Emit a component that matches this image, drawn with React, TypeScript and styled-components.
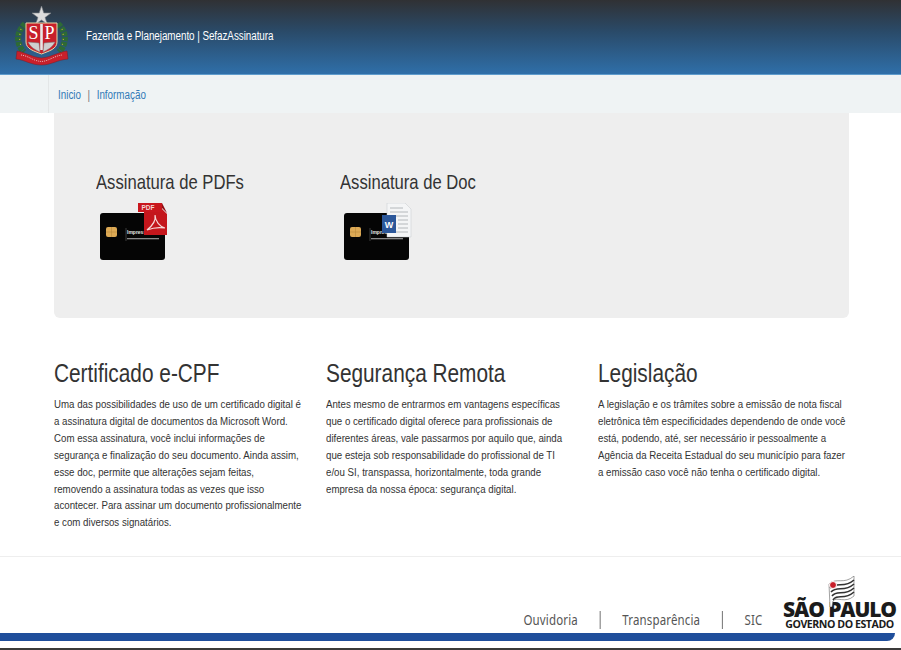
import styled, { createGlobalStyle, css } from "styled-components";

const GlobalStyle = createGlobalStyle`
  html, body {
    margin: 0;
    padding: 0;
    background: #fff;
    font-family: "Liberation Sans", Arial, sans-serif;
    color: #333;
  }
`;

// the reference is squeezed sideways, so its text is narrower than any installed font
const squeezed = css`
  transform: scaleX(0.82);
  transform-origin: left center;
`;

const Page = styled.div`
  width: 901px;
  height: 650px;
  overflow: hidden;
  display: flex;
  flex-direction: column;
`;

const Header = styled.header`
  height: 75px;
  flex: none;
  display: flex;
  align-items: flex-start;
  padding-left: 15px;
  box-sizing: border-box;
  background: linear-gradient(to bottom, #303134 0%, #2a4a68 42%, #2f6fa9 100%);
  border-bottom: 1px solid #5f9ccc;
`;

const HeaderTitle = styled.div`
  margin: 29px 0 0 17px;
  color: #fff;
  font-size: 12px;
  line-height: 14px;
  letter-spacing: -0.05px;
  white-space: nowrap;
  ${squeezed}
`;

const NavBar = styled.nav`
  height: 38px;
  flex: none;
  background: #eff3f4;
  padding-left: 48px;
  box-sizing: border-box;
`;

const NavInner = styled.div`
  height: 100%;
  border-left: 1px solid #e3e6e7;
  padding-left: 9px;
`;

const NavLinks = styled.div`
  height: 100%;
  display: flex;
  align-items: center;
  gap: 8px;
  padding-top: 2px;
  box-sizing: border-box;
  font-size: 12px;
  ${squeezed}
`;

const NavLink = styled.a`
  color: #337ab7;
`;

const NavSep = styled.span`
  color: #777;
`;

const Jumbotron = styled.section`
  flex: none;
  height: 205px;
  margin: 0 52px 0 54px;
  background: #eeeeee;
  border-radius: 0 0 6px 6px;
  display: flex;
  padding: 58px 0 0 42px;
  box-sizing: border-box;
`;

const Feature = styled.div`
  width: 243.5px;
`;

const FeatureTitle = styled.h3`
  margin: 0;
  font-size: 20.3px;
  line-height: 22px;
  font-weight: 400;
  white-space: nowrap;
  color: #333;
  ${squeezed}
`;

const CardArt = styled.svg`
  display: block;
  margin: 10px 0 0 4px;
`;

const Columns = styled.section`
  flex: none;
  margin: 40px 0 0 54px;
  display: grid;
  grid-template-columns: repeat(3, 250px);
  column-gap: 22px;
  height: 198px;
`;

const ColumnTitle = styled.h2`
  margin: 0 0 8px;
  font-size: 25.4px;
  line-height: 30px;
  font-weight: 400;
  white-space: nowrap;
  color: #333;
  ${squeezed}
`;

const ColumnText = styled.p`
  margin: 0;
  width: 304px;
  font-size: 11.83px;
  line-height: 16.9px;
  color: #333;
  transform: scaleX(0.82);
  transform-origin: left top;
`;

const Footer = styled.footer`
  flex: none;
  border-top: 1px solid #eeeeee;
  height: 94px;
  box-sizing: border-box;
  display: flex;
  flex-direction: column;
  justify-content: flex-end;
`;

const FooterRow = styled.div`
  display: flex;
  justify-content: flex-end;
  align-items: flex-end;
  height: 60px;
  padding-right: 6px;
  margin-bottom: 4px;
`;

const FooterLinks = styled.div`
  display: flex;
  align-items: center;
  margin: 0 22px 0 0;
  font-family: "Noto Sans", sans-serif;
  font-size: 14px;
  letter-spacing: 0.2px;
  color: #555;
  transform: scaleX(0.82);
  transform-origin: right center;
`;

const FooterLink = styled.span<{ $divider?: boolean }>`
  padding: 0 26.5px;
  line-height: 18px;
  border-right: ${(p) => (p.$divider ? "1px solid #555" : "none")};

  &:first-child {
    padding-left: 0;
  }
  &:last-child {
    padding-right: 0;
  }
`;

const StateLogo = styled.div`
  width: 111px;
  position: relative;
  display: flex;
  flex-direction: column;
  align-items: center;
  font-family: "Open Sans", sans-serif;
  color: #1b1b1b;
  font-weight: 800;
  white-space: nowrap;
`;

const LogoFlag = styled.svg`
  position: absolute;
  left: 43px;
  top: -24px;
`;

const LogoName = styled.div`
  font-size: 21px;
  line-height: 19px;
  letter-spacing: -1.1px;
`;

const LogoSub = styled.div`
  font-size: 10.6px;
  font-weight: 700;
  line-height: 10px;
  letter-spacing: -0.45px;
`;

const BlueBar = styled.div`
  height: 8px;
  flex: none;
  margin-right: 6px;
  background: #1f4e9b;
  border-radius: 0 0 8px 0;
`;

const BottomLine = styled.div`
  height: 2px;
  flex: none;
  margin-top: 7px;
  background: #3a3a3a;
`;

const Crest = () => (
  <svg width="54" height="68" viewBox="0 0 54 68">
    <polygon points="26.5,6 28.8,13 36,13 30,17.5 32.3,24 26.5,20 20.7,24 23,17.5 17,13 24.2,13" fill="#dcdcdc" stroke="#7f8388" strokeWidth="0.6" />
    <path d="M10 24 C1 32 1 44 9 52" fill="none" stroke="#2d6a35" strokeWidth="6" strokeDasharray="4 1" />
    <path d="M43 24 C52 32 52 44 44 52" fill="none" stroke="#2d6a35" strokeWidth="6" strokeDasharray="4 1" />
    <path d="M6 29 C4 35 4 42 7 48" fill="none" stroke="#c9a93f" strokeWidth="1.2" strokeDasharray="1 4" />
    <path d="M47 29 C49 35 49 42 46 48" fill="none" stroke="#c9a93f" strokeWidth="1.2" strokeDasharray="1 4" />
    <path d="M11 23 H42 V42 C42 49 34 51 26.5 54 C19 51 11 49 11 42 Z" fill="#c8202b" stroke="#e8d9a8" strokeWidth="1" />
    <rect x="25.2" y="24" width="2.6" height="26" fill="#e6e6e6" />
    <text x="18.5" y="39" textAnchor="middle" fontFamily="Liberation Serif" fontSize="18" fill="#fff">S</text>
    <text x="34.5" y="39" textAnchor="middle" fontFamily="Liberation Serif" fontSize="18" fill="#fff">P</text>
    <path d="M13 42 C16 48 21 50 25 52 L24 43 Z" fill="#cfcfcf" stroke="#777" strokeWidth="0.5" />
    <path d="M40 42 C37 48 32 50 28 52 L29 43 Z" fill="#cfcfcf" stroke="#777" strokeWidth="0.5" />
    <path d="M2 51 C10 52 16 57 26.5 58 C37 57 43 52 52 51 L53 59 C42 60 36 65 26.5 65 C16 65 10 60 1 59 Z" fill="#c8202b" stroke="#7e1a20" strokeWidth="0.5" />
    <path d="M6 55 C14 56 18 61 26.5 61.5 C34 61 39 56 47 55" fill="none" stroke="#e7b9b9" strokeWidth="1" strokeDasharray="1 1" />
  </svg>
);

const CardBody = () => (
  <>
    <rect x="0" y="10" width="65" height="47" rx="3" fill="#050505" />
    <rect x="6" y="24" width="11" height="10" rx="2" fill="#dca955" />
    <path d="M6 29 H17 M11.5 24 V34" stroke="#b98a3c" strokeWidth="0.6" />
    <line x1="26" y1="25" x2="26" y2="38" stroke="#777" strokeWidth="0.5" />
    <text x="27" y="31" fontFamily="Liberation Sans" fontSize="5" fontWeight="700" fill="#e5e5e5">Impressão</text>
    <rect x="27" y="35" width="32" height="1.3" fill="#8a8a8a" />
  </>
);

const PdfCard = () => (
  <CardArt width="70" height="60" viewBox="0 0 70 60">
    <CardBody />
    <path d="M44 5 H61 L67 11 V32 H44 Z" fill="#c4161c" />
    <rect x="38" y="0" width="24" height="9" fill="#c9161d" />
    <polygon points="62,0 62,5 67,10" fill="#8f1015" />
    <text x="48" y="7" textAnchor="middle" fontFamily="Liberation Sans" fontSize="6.5" fontWeight="700" fill="#f3d5d5">PDF</text>
    <path d="M47 27 C52 23 56 17 55 12 C55 18 60 24 65 25 C59 24 52 25 47 27 Z" fill="none" stroke="#f6d9d9" strokeWidth="1.2" />
  </CardArt>
);

const DocCard = () => (
  <CardArt width="70" height="60" viewBox="0 0 70 60">
    <CardBody />
    <path d="M43 0 H61 L67 6 V34 H43 Z" fill="#f4f5f6" stroke="#c5c8cc" strokeWidth="0.5" />
    <path d="M46 5 H59 M46 9 H64 M46 13 H64 M54 17 H64 M54 21 H64 M54 25 H64 M46 29 H64" stroke="#a4a8ad" strokeWidth="0.8" />
    <rect x="38" y="12" width="14" height="18" fill="#2b579a" />
    <text x="45" y="25" textAnchor="middle" fontFamily="Liberation Sans" fontSize="9" fontWeight="700" fill="#fff">W</text>
  </CardArt>
);

const App = () => {
  return (
    <Page>
      <GlobalStyle />
      <Header>
        <Crest />
        <HeaderTitle>Fazenda e Planejamento | SefazAssinatura</HeaderTitle>
      </Header>
      <NavBar>
        <NavInner>
          <NavLinks>
            <NavLink>Inicio</NavLink>
            <NavSep>|</NavSep>
            <NavLink>Informação</NavLink>
          </NavLinks>
        </NavInner>
      </NavBar>
      <Jumbotron>
        <Feature>
          <FeatureTitle>Assinatura de PDFs</FeatureTitle>
          <PdfCard />
        </Feature>
        <Feature>
          <FeatureTitle>Assinatura de Doc</FeatureTitle>
          <DocCard />
        </Feature>
      </Jumbotron>
      <Columns>
        <div>
          <ColumnTitle>Certificado e-CPF</ColumnTitle>
          <ColumnText>
            Uma das possibilidades de uso de um certificado digital é a assinatura digital de documentos da Microsoft Word. Com essa assinatura, você inclui informações de segurança e finalização do seu documento. Ainda assim, esse doc, permite que alterações sejam feitas, removendo a assinatura todas as vezes que isso acontecer. Para assinar um documento profissionalmente e com diversos signatários.
          </ColumnText>
        </div>
        <div>
          <ColumnTitle>Segurança Remota</ColumnTitle>
          <ColumnText>
            Antes mesmo de entrarmos em vantagens específicas que o certificado digital oferece para profissionais de diferentes áreas, vale passarmos por aquilo que, ainda que esteja sob responsabilidade do profissional de TI e/ou SI, transpassa, horizontalmente, toda grande empresa da nossa época: segurança digital.
          </ColumnText>
        </div>
        <div>
          <ColumnTitle>Legislação</ColumnTitle>
          <ColumnText>
            A legislação e os trâmites sobre a emissão de nota fiscal eletrônica têm especificidades dependendo de onde você está, podendo, até, ser necessário ir pessoalmente a Agência da Receita Estadual do seu município para fazer a emissão caso você não tenha o certificado digital.
          </ColumnText>
        </div>
      </Columns>
      <Footer>
        <FooterRow>
          <FooterLinks>
            <FooterLink $divider>Ouvidoria</FooterLink>
            <FooterLink $divider>Transparência</FooterLink>
            <FooterLink>SIC</FooterLink>
          </FooterLinks>
          <StateLogo>
            <LogoName>SÃO PAULO</LogoName>
            <LogoSub>GOVERNO DO ESTADO</LogoSub>
            <LogoFlag width="28" height="31" viewBox="0 0 28 31">
              <path d="M2 8 C9 1 17 9 27 0 V20 C18 28 10 20 6 25 L5 31 H3 Z" fill="#fff" stroke="#444" strokeWidth="0.5" />
              <path d="M3 12 C10 5 17 13 27 4 M4 16 C10 9 17 17 27 8 M5 20 C10 13 17 21 27 12 M6 24 C10 17 17 25 27 16" stroke="#333" strokeWidth="1.6" fill="none" />
              <circle cx="6" cy="9" r="3.5" fill="#c8202b" stroke="#fff" />
            </LogoFlag>
          </StateLogo>
        </FooterRow>
        <BlueBar />
        <BottomLine />
      </Footer>
    </Page>
  );
};

export default App;
